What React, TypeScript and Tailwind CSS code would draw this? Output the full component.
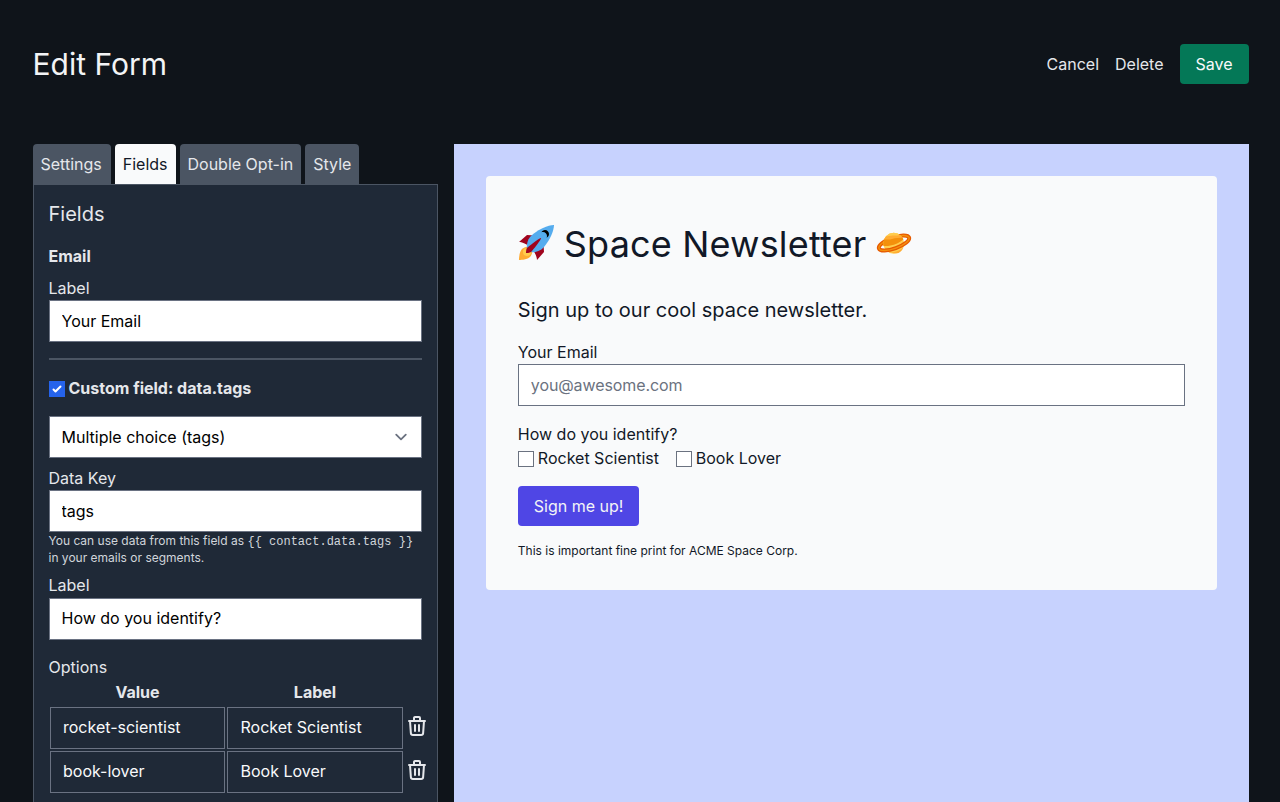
import type { ReactNode } from "react";

const inputBase = "block h-[42px] w-full border border-gray-500 px-3 text-base outline-none";
const lightInput = `${inputBase} bg-white text-black`;
const darkInput = `${inputBase} bg-[#1f2937] text-[#f9fafb]`;

function Rocket() {
  return (
    <svg viewBox="0 0 36 36" className="mt-[-2px] size-9 shrink-0" aria-hidden="true">
      <path fill="#A0041E" d="M1 17l8-7 16 1 1 16-7 8s.001-5.999-6-12-12-6-12-6z" />
      <path fill="#FFAC33" d="M.973 35s-.036-7.979 2.985-11S15 21.187 15 21.187 14.999 29 11.999 32c-3 3-11.026 3-11.026 3z" />
      <circle fill="#FFCC4D" cx="9" cy="27" r="4" />
      <path fill="#55ACEE" d="M36 0s-10 0-22 10c-6 5-6 14-4 16s11 2 16-4c10-12 10-22 10-22z" />
      <path d="M27 5c-1.623 0-3.013.971-3.641 2.36C23.861 7.133 24.414 7 25 7c2.209 0 4 1.791 4 4 0 .586-.133 1.139-.359 1.64C30.03 12.013 31 10.623 31 9c0-2.209-1.791-4-4-4z" />
      <path fill="#A0041E" d="M8 28s0-4 1-5 13.001-10.999 14-10-9.001 13-10.001 14S8 28 8 28z" />
    </svg>
  );
}

function Planet() {
  return (
    <svg viewBox="0 0 36 36" className="mt-[-2px] size-9 shrink-0" aria-hidden="true">
      <defs>
        <clipPath id="planet-disc">
          <circle cx="17.7" cy="18.3" r="10.5" />
        </clipPath>
        <clipPath id="planet-front">
          <path d="M0 0h29L27.200 14.500C23 18.500 15 21.500 8 21H0z" />
        </clipPath>
      </defs>
      <circle cx="17.700" cy="18.300" r="10.500" fill="#FFCC4D" />
      <path fill="#FFAC33" d="M15 27.500c5-.3 9-2 12.500-5-1 2.500-3 4.600-5 5.400-2 .3-5 .6-7.500-.4z" />
      <g fill="none" transform="rotate(-20 18 18)">
        <ellipse cx="18" cy="18" rx="16" ry="5.500" stroke="#E75A00" strokeWidth="4" />
        <ellipse cx="18" cy="18" rx="16" ry="5.500" stroke="#F4900C" strokeWidth="1.400" />
      </g>
      <g clipPath="url(#planet-front)">
        <g clipPath="url(#planet-disc)">
          <rect width="36" height="36" fill="#FFCC4D" />
          <path fill="#FFAC33" d="M7 11c4 1 7-1 11-.500 4 .300 6-1 10-1v5L8 20z" />
          <path fill="#F4900C" d="M6 15.500c3-2 6 0 10-1.500 4-1.700 8-.500 13-2v4L8 24z" />
        </g>
      </g>
    </svg>
  );
}

function Trash() {
  return (
    <svg viewBox="0 0 24 24" className="mt-[-4px] size-6" fill="none" stroke="#e5e7eb" strokeWidth="2" strokeLinecap="round" strokeLinejoin="round">
      <path d="M19 7l-.867 12.142A2 2 0 0116.138 21H7.862a2 2 0 01-1.995-1.858L5 7m5 4v6m4-6v6m1-10V4a1 1 0 00-1-1h-4a1 1 0 00-1 1v3M4 7h16" />
    </svg>
  );
}

function Tab({ active, className = "", children }: { active?: boolean; className?: string; children: ReactNode }) {
  return (
    <button className={`h-10 rounded-t px-2 text-left ${active ? "bg-gray-50 text-[#111827]" : "bg-[#4b5563] text-[#e5e7eb]"} ${className}`}>
      {children}
    </button>
  );
}

function Choice({ children }: { children: ReactNode }) {
  return (
    <label className="flex gap-1 whitespace-nowrap">
      <span className="mt-[5px] size-4 shrink-0 border border-[#6b7280] bg-white" />
      {children}
    </label>
  );
}

const options = [
  ["rocket-scientist", "Rocket Scientist"],
  ["book-lover", "Book Lover"],
];

export default function App() {
  return (
    <div className="h-[802px] overflow-hidden bg-[#0f141a] pl-[32.5px] font-['Inter',sans-serif] text-base text-[#e5e7eb]">
      <div className="w-[1216px]">
        <header className="flex h-[144px] items-start justify-between pt-11">
          <h1 className="text-3xl leading-10 text-[#f3f4f6]">Edit Form</h1>
          <nav className="flex items-center gap-4">
            <a>Cancel</a>
            <a>Delete</a>
            <button className="h-10 w-[69px] rounded bg-[#047857] text-center text-[#f9fafb]">Save</button>
          </nav>
        </header>

        <main className="flex gap-4">
          <section className="w-[405.33px] shrink-0">
            <div className="flex gap-1">
              <Tab className="w-[78.25px]">Settings</Tab>
              <Tab active>Fields</Tab>
              <Tab>Double Opt-in</Tab>
              <Tab>Style</Tab>
            </div>
            <div className="h-[700px] border border-[#4b5563] bg-[#1f2937] p-[15px]">
              <h2 className="mb-4 text-xl">Fields</h2>
              <h3 className="mb-2 font-bold">Email</h3>
              <label className="block">Label</label>
              <input className={lightInput} defaultValue="Your Email" />
              <hr className="my-4 border-t-2 border-[#4b5563]" />
              <label className="flex gap-1 font-bold">
                <span className="mt-[5px] size-4 shrink-0 bg-[#2563eb]">
                  <svg viewBox="0 0 16 16" fill="white">
                    <path d="M12.207 4.793a1 1 0 010 1.414l-5 5a1 1 0 01-1.414 0l-2-2a1 1 0 011.414-1.414L6.500 9.086l4.293-4.293a1 1 0 011.414 0z" />
                  </svg>
                </span>
                Custom field: data.tags
              </label>
              <div className={`${lightInput} mt-4 flex items-center justify-between`}>
                Multiple choice (tags)
                <svg viewBox="0 0 20 20" className="mr-[-4px] size-6" fill="none" stroke="#6b7280" strokeWidth="1.5" strokeLinecap="round" strokeLinejoin="round">
                  <path d="M6 8l4 4 4-4" />
                </svg>
              </div>
              <label className="mt-2 block">Data Key</label>
              <input className={lightInput} defaultValue="tags" />
              <p className="h-[33.25px] text-xs leading-[17px] text-[#d1d5db]">
                You can use data from this field as{" "}
                <code className="font-['Liberation_Mono',monospace] leading-none">{"{{ contact.data.tags }}"}</code>
                <br />
                in your emails or segments.
              </p>
              <label className="mt-2 block h-[24.25px]">Label</label>
              <input className={`${lightInput} pb-0.5`} defaultValue="How do you identify?" />
              <div className="mt-[15.5px]">Options</div>
              <div className="grid w-[385px] grid-cols-[175px_176px_24px] grid-rows-[25px] gap-0.5 pt-px pl-[1.5px]">
                <div className="text-center font-bold">Value</div>
                <div className="text-center font-bold">Label</div>
                <div />
                {options.map(([value, label]) => (
                  <div key={value} className="contents">
                    <input className={`${darkInput} pb-0.5`} defaultValue={value} />
                    <input className={`${darkInput} pb-0.5 pl-[12.5px]`} defaultValue={label} />
                    <button className="flex items-center">
                      <Trash />
                    </button>
                  </div>
                ))}
              </div>
            </div>
          </section>

          <section className="h-[700px] flex-1 bg-[#c7d2fe] p-8 text-[#111827]">
            <div className="rounded bg-gray-50 p-8">
              <h1 className="mt-4 mb-8 flex h-10 items-center gap-2.5 text-4xl tracking-[0.17px]">
                <Rocket />
                Space Newsletter
                <Planet />
              </h1>
              <p className="mb-4 text-xl">Sign up to our cool space newsletter.</p>
              <label className="block">Your Email</label>
              <input className={`${lightInput} tracking-[-0.1px] placeholder:text-[#6b7280]`} placeholder="you@awesome.com" />
              <div className="mt-4">How do you identify?</div>
              <div className="flex gap-[16.75px]">
                <Choice>Rocket Scientist</Choice>
                <Choice>Book Lover</Choice>
              </div>
              <button className="mt-4 block h-10 rounded bg-[#4f46e5] px-4 text-[#f3f4f6]">Sign me up!</button>
              <p className="mt-[17px] mb-[-1px] text-xs">This is important fine print for ACME Space Corp.</p>
            </div>
          </section>
        </main>
      </div>
    </div>
  );
}
